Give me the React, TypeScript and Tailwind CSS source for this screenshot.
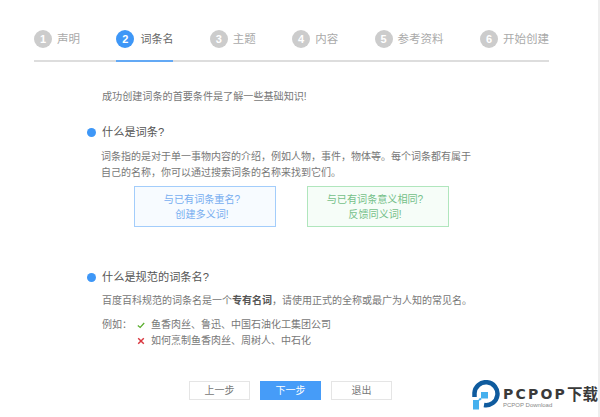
const steps = ["声明", "词条名", "主题", "内容", "参考资料", "开始创建"];

function Section({ title }: { title: string }) {
  return (
    <div className="flex items-center h-[16px] text-[11.2px] leading-[16px] text-[#555]">
      <span className="w-[9px] h-[9px] rounded-full bg-[#3e97f7] mr-[6px]" />
      {title}
    </div>
  );
}

export default function App() {
  return (
    <div className="relative w-[600px] h-[417px] bg-white overflow-hidden border-r-2 border-[#eeeeee] font-['Liberation_Sans','Noto_Sans_CJK_SC',sans-serif]">
      <div className="mt-[30px] ml-[34px] w-[515px] flex justify-between border-b-2 border-[#dddddd]">
        {steps.map((s, i) => {
          const active = i === 1;
          return (
            <div
              key={s}
              className={
                active
                  ? "flex items-start h-[30px] -mb-[2px] border-b-2 border-[#63a9f5] box-content"
                  : "flex items-start h-[30px]"
              }
            >
              <span
                className={
                  active
                    ? "w-[18px] h-[18px] rounded-full bg-[#3e97f7] text-white text-[11px] font-bold flex items-center justify-center mr-[6px]"
                    : "w-[18px] h-[18px] rounded-full bg-[#cccccc] text-white text-[11px] font-bold flex items-center justify-center mr-[5px]"
                }
              >
                {i + 1}
              </span>
              <span className={active ? "text-[11px] leading-[19px] text-[#666]" : "text-[11.5px] leading-[19px] text-[#aaaaaa]"}>{s}</span>
            </div>
          );
        })}
      </div>

      <div className="pl-[87px]">
        <p className="mt-[28px] ml-[15px] text-[10.1px] leading-[14px] text-[#777]">成功创建词条的首要条件是了解一些基础知识!</p>

        <div className="mt-[20px]">
          <Section title="什么是词条?" />
          <p className="mt-[9px] ml-[14px] whitespace-nowrap text-[10px] leading-[16px] text-[#777]">
            词条指的是对于单一事物内容的介绍，例如人物，事件，物体等。每个词条都有属于
            <br />
            自己的名称，你可以通过搜索词条的名称来找到它们。
          </p>
          <div className="mt-[5px] ml-[47px] flex gap-[31px]">
            <div className="w-[142px] h-[41px] pr-[6px] border border-[#a3cdfb] bg-[#f7fbff] flex flex-col items-center justify-center text-[10.1px] leading-[15px] text-[#78aef0]">
              <span>与已有词条重名?</span>
              <span>创建多义词!</span>
            </div>
            <div className="w-[142px] h-[41px] pr-[6px] border border-[#b0e6bd] bg-[#f6fdf8] flex flex-col items-center justify-center text-[10.1px] leading-[15px] text-[#74c088]">
              <span>与已有词条意义相同?</span>
              <span>反馈同义词!</span>
            </div>
          </div>
        </div>

        <div className="mt-[42px]">
          <Section title="什么是规范的词条名?" />
          <p className="mt-[8px] ml-[15px] text-[10px] leading-[16px] text-[#777]">
            百度百科规范的词条名是一个<span className="font-bold text-[#555]">专有名词</span>，请使用正式的全称或最广为人知的常见名。
          </p>
          <div className="mt-[8px] ml-[15px] flex text-[10px] leading-[16px] text-[#777]">
            <span className="w-[35px]">例如：</span>
            <div>
              <div className="flex items-center">
                <svg className="w-[8px] h-[8px] mr-[6px]" viewBox="0 0 10 10" fill="none" stroke="#5aae2e" strokeWidth="1.6">
                  <path d="M1 5.5 L4 8 L9 2.5" />
                </svg>
                鱼香肉丝、鲁迅、中国石油化工集团公司
              </div>
              <div className="flex items-center">
                <svg className="w-[8px] h-[8px] mr-[6px]" viewBox="0 0 10 10" fill="none" stroke="#d9363e" strokeWidth="1.8">
                  <path d="M1.5 1.5 L8.5 8.5 M8.5 1.5 L1.5 8.5" />
                </svg>
                如何烹制鱼香肉丝、周树人、中石化
              </div>
            </div>
          </div>
        </div>
      </div>

      <div className="mt-[32px] ml-[189px] flex gap-[10px] text-[10px]">
        <button className="w-[61px] h-[19px] border border-[#e5e5e5] bg-white text-[#777] flex items-center justify-center">上一步</button>
        <button className="w-[61px] h-[19px] bg-[#469cf8] text-white flex items-center justify-center">下一步</button>
        <button className="w-[61px] h-[19px] border border-[#e5e5e5] bg-white text-[#777] flex items-center justify-center">退出</button>
      </div>

      <div className="absolute left-[472px] top-[380px] w-[126px] h-[37px] bg-white flex">
        <svg className="w-[30px] h-[30px] shrink-0" viewBox="0 0 30 30">
          <path d="M2.5 17 V13 A11.5 11.5 0 1 1 12 25" fill="none" stroke="#0f5b9e" strokeWidth="4.5" />
          <rect x="9" y="12" width="7" height="6.5" fill="#45b0ee" />
          <rect x="1" y="20" width="6" height="9.5" fill="#45b0ee" />
          <path d="M7 20 L9 18.5" stroke="#45b0ee" strokeWidth="2" />
        </svg>
        <div className="ml-[1px] mt-[8px]">
          <div className="flex items-center h-[13px] text-[#3a3a3a] font-bold whitespace-nowrap">
            <span className="text-[14px] tracking-[2.2px] font-['DejaVu_Sans',sans-serif]">PCPOP</span>
            <span className="text-[15.5px]">下载</span>
          </div>
          <div className="text-[6px] leading-[6px] mt-[1px] text-[#888] whitespace-nowrap">PCPOP Download</div>
        </div>
      </div>
    </div>
  );
}
